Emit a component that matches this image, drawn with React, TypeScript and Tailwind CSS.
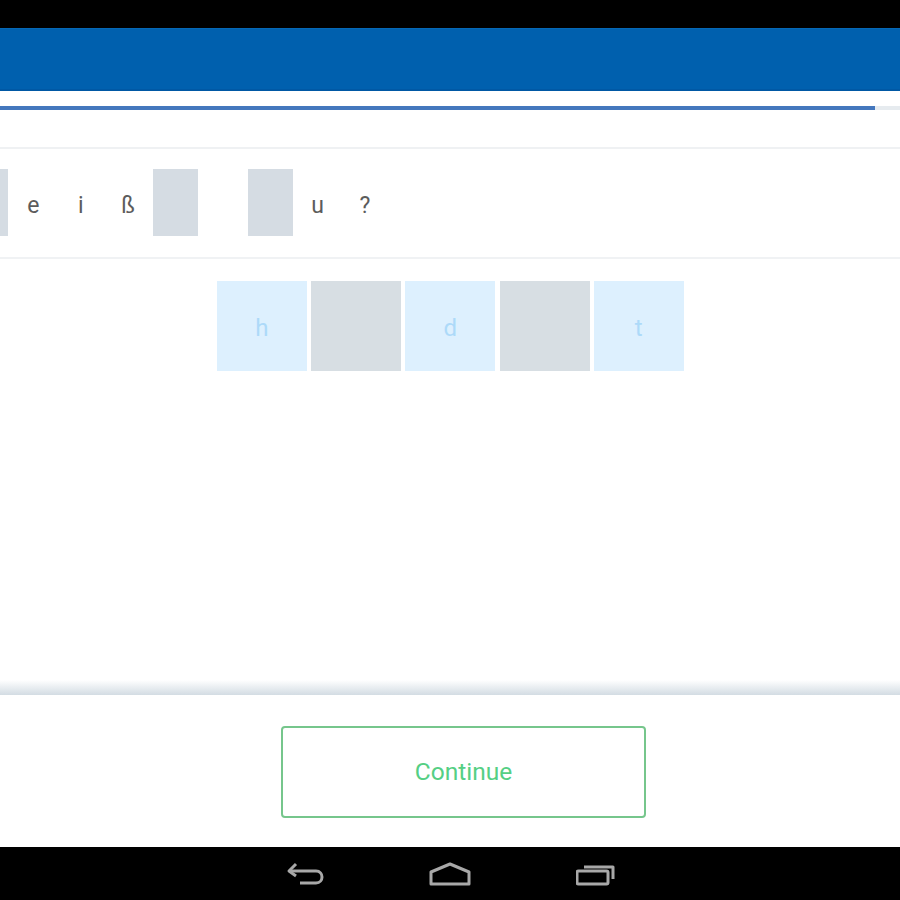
const sentence: { char: string; blank?: boolean }[] = [
  { char: '', blank: true },
  { char: 'e' },
  { char: 'i' },
  { char: 'ß' },
  { char: '', blank: true },
  { char: ' ' },
  { char: '', blank: true },
  { char: 'u' },
  { char: '?' },
];

const tiles = ['h', '', 'd', '', 't'];

export default function App() {
  return (
    <div className="w-[900px] h-[900px] flex flex-col overflow-hidden bg-white font-['Roboto',sans-serif]">
      <div className="h-[28px] shrink-0 bg-black" />
      <div className="h-[63px] shrink-0 bg-[#0060ae] border-t border-t-[#0568b6] border-b-2 border-b-[#0058a4]" />

      <div className="h-[58px] shrink-0 pt-[15px] border-b-2 border-b-[#eff1f3]">
        <div className="h-[4px] bg-[#e6ebef]">
          <div className="h-[4px] w-[875px] bg-[#4477bd]" />
        </div>
      </div>

      <div className="h-[110px] shrink-0 flex items-center overflow-hidden border-b-2 border-b-[#f0f2f4] pb-[1px]">
        <div className="flex gap-[2.4px] -ml-[36.6px]">
          {sentence.map((cell, idx) => (
            <div
              key={idx}
              className={`w-[45px] h-[67px] shrink-0 flex items-center justify-center pt-[7px] text-[23px] text-[#5c5c5c] ${
                cell.blank ? 'bg-[#d5dce3]' : ''
              }`}
            >
              {cell.char}
            </div>
          ))}
        </div>
      </div>

      <div className="flex-1 flex justify-center gap-[4.25px] pt-[22px] pl-[0.5px]">
        {tiles.map((letter, idx) => (
          <div
            key={idx}
            className={`w-[90px] h-[90px] flex items-center justify-center pt-[4px] text-[24px] text-[#addaf9] ${
              letter ? 'bg-[#ddf0fe]' : 'bg-[#d7dee3]'
            }`}
          >
            {letter}
          </div>
        ))}
      </div>

      <div className="h-[15px] shrink-0 bg-gradient-to-b from-white to-[#d3dce3]" />

      <div className="h-[152px] shrink-0 flex justify-center pt-[31px] pl-[27px]">
        <button className="w-[365px] h-[92px] rounded-[4px] border-2 border-[#76c68c] bg-white text-[24.5px] text-[#55cf84]">
          Continue
        </button>
      </div>

      <div className="h-[53px] shrink-0 bg-black flex items-center justify-center gap-[105px]">
        <svg width="40" height="26" viewBox="-3 0 40 26" fill="none" stroke="#a8a8a8" strokeWidth="3" strokeLinejoin="round">
          <path d="M9 3 L2 10 L9 15" />
          <path d="M2 10 H29 C37 10 37 22 29 22 H13" />
        </svg>
        <svg width="42" height="26" viewBox="1 0 42 26" fill="none" stroke="#a8a8a8" strokeWidth="3" strokeLinejoin="round">
          <path d="M3 11 L22 3 L41 11 V23 H3 Z" />
        </svg>
        <svg width="40" height="26" viewBox="1 0 40 26" fill="none" stroke="#a8a8a8" strokeWidth="3" strokeLinejoin="round">
          <rect x="2" y="10" width="31" height="13" rx="1.5" />
          <path d="M9 6 H38 V18" />
        </svg>
      </div>
    </div>
  );
}
